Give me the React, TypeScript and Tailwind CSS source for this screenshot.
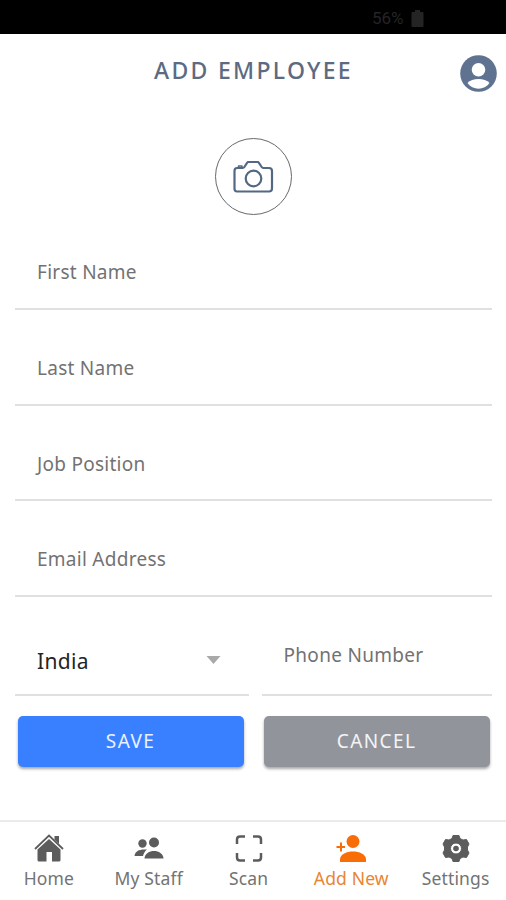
import type { ReactNode } from 'react';

function Field({ label, height }: { label: string; height: string }) {
  return (
    <label className={`ml-[15px] mr-[14px] block border-b-2 border-[#e0e0e0] pl-[22px] pr-4 ${height}`}>
      <span className="block pt-[45px] text-[19px] leading-[26px] tracking-[0.27px] text-[#727272]">{label}</span>
    </label>
  );
}

function Tab({ label, width, active, children }: { label: string; width: string; active?: boolean; children: ReactNode }) {
  return (
    <button className={`flex flex-col items-center pt-[11px] ${width} ${active ? 'text-[#f96d07]' : 'text-[#5c5c5c]'}`}>
      <svg width="32" height="32" viewBox="0 0 32 32" fill="currentColor">{children}</svg>
      <span className={`mt-[1px] whitespace-nowrap text-[17.5px] leading-6 ${active ? 'tracking-[0.15px] text-[#e98532]' : 'tracking-[0.15px] text-[#737373]'}`}>{label}</span>
    </button>
  );
}

export default function App() {
  return (
    <div className="flex h-[900px] w-[506px] flex-col overflow-hidden bg-white font-['Noto_Sans','Open_Sans',sans-serif]">
      <div className="flex h-[34px] shrink-0 items-center bg-black pl-[372px] pt-[2px] text-[#242424]">
        <span className="w-[34px] font-[Roboto,sans-serif] text-[17px] leading-5">56%</span>
        <svg className="ml-[5px]" width="13" height="17" viewBox="0 0 13 17" fill="currentColor">
          <path d="M4 0h5v2h2.500q1 0 1 1v13q0 1-1 1h-10q-1 0-1-1v-13q0-1 1-1h2.500z" />
        </svg>
      </div>

      <header className="grid h-[86px] shrink-0 grid-cols-[60px_1fr_60px]">
        <h1 className="col-start-2 pl-[1px] pt-[20px] text-center text-[23px] font-medium leading-8 tracking-[2.3px] text-[#5c6b81]">ADD EMPLOYEE</h1>
        <svg className="ml-[13px] mt-[20px]" width="39" height="39" viewBox="0 0 39 39">
          <circle cx="19.500" cy="19.500" r="18.300" fill="#5f7391" />
          <circle cx="19.500" cy="15.700" r="6.800" fill="white" />
          <path d="M8.500 29C13 23.500 26 23.500 30.500 29C25.500 36.500 13.500 36.500 8.500 29Z" fill="white" />
        </svg>
      </header>

      <div className="flex h-[94px] shrink-0 justify-center pt-[18px]">
        <button className="flex h-[77px] w-[77px] items-center justify-center rounded-full border border-[#666a6e]">
          <svg width="41" height="34" viewBox="0 0 41 34" fill="none" stroke="#526883" strokeWidth="2.200" strokeLinejoin="round" strokeLinecap="round">
            <path d="M4 8H10C12 8 13 3 15 2H25C27 3 28 8 30 8H36Q39 8 39 11V28.500Q39 31.500 36 31.500H4Q1.500 31.500 1.500 28.500V11Q1.500 8 4 8Z" />
            <path d="M5.500 7V6H9V7" strokeWidth="1.500" />
            <circle cx="20.500" cy="18.500" r="7.800" />
          </svg>
        </button>
      </div>

      <form className="flex flex-col">
        <Field label="First Name" height="h-[96px]" />
        <Field label="Last Name" height="h-[96px]" />
        <Field label="Job Position" height="h-[95px]" />
        <Field label="Email Address" height="h-[96px]" />
        <div className="flex h-[99px] gap-[13px] pl-[15px] pr-[14px]">
          <div className="flex w-[234px] justify-between border-b-2 border-[#e0e0e0] pl-[22px] pr-[28px] pt-[50px]">
            <span className="text-[21px] leading-7 tracking-[0.3px] text-[#242424]">India</span>
            <svg className="mt-[9px]" width="15" height="8" viewBox="0 0 15 8"><path d="M0.500 0h14L7.500 8z" fill="#a9a9a9" /></svg>
          </div>
          <div className="w-[230px] border-b-2 border-[#e0e0e0] pl-[21.500px] pt-[45px] text-[19px] leading-[26px] tracking-[0.3px] text-[#727272]">Phone Number</div>
        </div>
        <div className="flex gap-[20px] pl-[17.500px] pt-[20px]">
          <button type="button" className="h-[51px] w-[226px] rounded-[5px] bg-[#3880ff] text-[19px] tracking-[1.4px] text-white/90 shadow-[0_2px_3px_rgba(0,0,0,0.35)]">SAVE</button>
          <button type="button" className="h-[51px] w-[226px] rounded-[5px] bg-[#92949c] text-[19px] tracking-[1.4px] text-white/90 shadow-[0_2px_3px_rgba(0,0,0,0.35)]">CANCEL</button>
        </div>
      </form>

      <nav className="mt-auto flex h-[80px] shrink-0 border-t-2 border-[#ebebeb]">
        <Tab label="Home" width="w-[98px]">
          <path d="M4.500 16.500L16 6L27.500 16.500V27Q27.500 28.500 26 28.500H19V19H13.500V28.500H6Q4.500 28.500 4.500 27Z" />
          <path d="M2 16L16 2.500L30 16" fill="none" stroke="currentColor" strokeWidth="1.800" />
          <path d="M21.500 3H26V11L21.500 6.500Z" />
        </Tab>
        <Tab label="My Staff" width="w-[102px]">
          <circle cx="9.500" cy="10.500" r="4.200" /><circle cx="21" cy="9.500" r="5" />
          <path d="M1.500 23C2 18.500 6 16.500 11 16.500H14C12 18 10.500 20.500 10 23Z" />
          <path d="M11.500 25.500C12 15.500 30 15.500 30.500 25.500Z" />
        </Tab>
        <Tab label="Scan" width="w-[98px]">
          <path d="M4 11V6.500Q4 3.500 7 3.500H12M20 3.500H25Q28 3.500 28 6.500V11M28 20V24.500Q28 27.500 25 27.500H20M12 27.500H7Q4 27.500 4 24.500V20" fill="none" stroke="currentColor" strokeWidth="2.500" />
        </Tab>
        <Tab label="Add New" width="w-[108px]" active>
          <circle cx="18" cy="8.500" r="6.500" />
          <path d="M5 29V26C6 16 30 16 31 26V29Z" />
          <path d="M1.500 14H10M6 9.500V18.500" stroke="currentColor" strokeWidth="2" />
        </Tab>
        <Tab label="Settings" width="w-[101px]">
          <path stroke="currentColor" strokeLinejoin="round" fillRule="evenodd" d="M13 2.500H19L20 5.500L23 7L26.500 6.500L29 11L27.500 14V17L29 20L26.500 24.500L23 24L20 25.500L19 28.500H13L12 25.500L9 24L5.500 24.500L3 20L4.500 17V14L3 11L5.500 6.500L9 7L12 5.500ZM16 10A5.500 5.500 0 1 0 16 21A5.500 5.500 0 1 0 16 10Z" />
          <circle cx="16" cy="15.500" r="2.800" />
        </Tab>
      </nav>
    </div>
  );
}
